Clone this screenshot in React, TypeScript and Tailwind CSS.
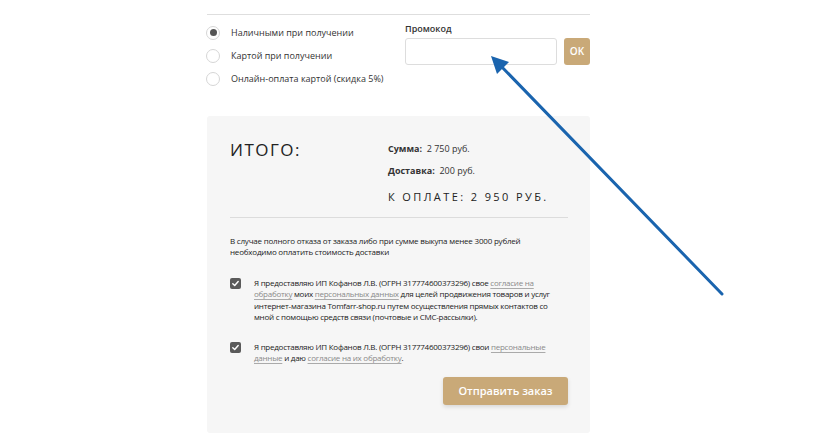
import React from "react";

const Radio = ({ checked, label }: { checked?: boolean; label: string }) => (
  <div className="flex h-[23px] items-center">
    <span className="ml-[-1px] flex h-[14px] w-[14px] items-center justify-center rounded-full border border-[#d6d6d6] bg-white">
      {checked && <span className="h-[7px] w-[7px] rounded-full bg-[#555]" />}
    </span>
    <span className="ml-[11px] whitespace-nowrap text-[9px] text-[#333]">{label}</span>
  </div>
);

const Check = () => (
  <span className="mt-[1px] flex h-[11px] w-[11px] shrink-0 items-center justify-center rounded-[2px] bg-[#5a5a5a]">
    <svg width="9" height="9" viewBox="0 0 10 10" fill="none">
      <path d="M2 5.2 L4.1 7.2 L8 2.8" stroke="white" strokeWidth="1.6" strokeLinecap="round" strokeLinejoin="round" />
    </svg>
  </span>
);

const Link = ({ children }: { children: React.ReactNode }) => (
  <span className="text-[#8a8a8a] underline decoration-[#aaa] underline-offset-2">{children}</span>
);

export default function App() {
  return (
    <div className="relative h-[447px] w-[840px] overflow-hidden bg-white" style={{ fontFamily: '"Open Sans", sans-serif' }}>
      <div className="ml-[207px] w-[383px] pt-[14px]">
        <div className="flex border-t border-[#dedede]">
          <div className="w-[198px] pt-[6px]">
            <Radio checked label="Наличными при получении" />
            <Radio label="Картой при получении" />
            <Radio label="Онлайн-оплата картой (скидка 5%)" />
          </div>
          <div className="flex-1 pt-[7px]">
            <div className="h-[14px] text-[9px] font-semibold leading-[14px] text-[#333]">Промокод</div>
            <div className="mt-[2px] flex gap-[7px]">
              <div className="h-[27px] w-[152px] rounded-[3px] border border-[#ddd] bg-white" />
              <div className="flex h-[27px] flex-1 items-center justify-center rounded-[3px] bg-[#c9a978] text-[10px] font-semibold text-white">OK</div>
            </div>
          </div>
        </div>

        <div className="mt-[26px] rounded-[3px] bg-[#f6f6f6] pl-[23px] pr-[22px] pb-[28px] pt-[26px]">
          <div className="flex">
            <div className="w-[158px] text-[17px] leading-[16px] tracking-[1.5px] text-[#222]">ИТОГО:</div>
            <div className="pt-[1px]">
              <div className="text-[9px] leading-[12px] text-[#333]"><span className="font-bold">Сумма:</span>&nbsp; 2 750 руб.</div>
              <div className="mt-[10px] text-[9px] leading-[12px] text-[#333]"><span className="font-bold">Доставка:</span>&nbsp; 200 руб.</div>
              <div className="mt-[12px] text-[11px] leading-[16px] tracking-[2.4px] text-[#222]">К ОПЛАТЕ: 2 950 РУБ.</div>
            </div>
          </div>
          <div className="mt-[12px] border-t border-[#dcdcdc]" />
          <div className="mt-[17px] text-[8px] leading-[11px] tracking-[-0.2px] text-[#222]">
            В случае полного отказа от заказа либо при сумме выкупа менее 3000 рублей
            <br />
            необходимо оплатить стоимость доставки
          </div>
          <div className="mt-[20px] flex gap-[13px]">
            <Check />
            <div className="w-[300px] text-[8px] leading-[11.3px] tracking-[-0.25px] text-[#222]">
              Я предоставляю ИП Кофанов Л.В. (ОГРН 317774600373296) свое <Link>согласие на обработку</Link> моих <Link>персональных данных</Link> для целей продвижения товаров и услуг интернет-магазина Tomfarr-shop.ru путем осуществления прямых контактов со мной с помощью средств связи (почтовые и СМС-рассылки).
            </div>
          </div>
          <div className="mt-[19px] flex gap-[13px]">
            <Check />
            <div className="w-[300px] text-[8px] leading-[11.3px] tracking-[-0.25px] text-[#222]">
              Я предоставляю ИП Кофанов Л.В. (ОГРН 317774600373296) свои <Link>персональные данные</Link> и даю <Link>согласие на их обработку</Link>.
            </div>
          </div>
          <div className="mt-[13px] flex justify-end">
            <div className="flex h-[28px] w-[125px] items-center justify-center rounded-[3px] bg-[#c9a978] text-[11px] font-semibold text-white shadow-[0_2px_4px_rgba(0,0,0,0.12)]">
              Отправить заказ
            </div>
          </div>
        </div>
      </div>

      <svg className="pointer-events-none absolute left-0 top-0" width="840" height="447" viewBox="0 0 840 447">
        <line x1="722" y1="294" x2="500" y2="65" stroke="#1a64ae" strokeWidth="3" strokeLinecap="round" />
        <polygon points="491,56 509,62 497,74" fill="#1a64ae" />
      </svg>
    </div>
  );
}
